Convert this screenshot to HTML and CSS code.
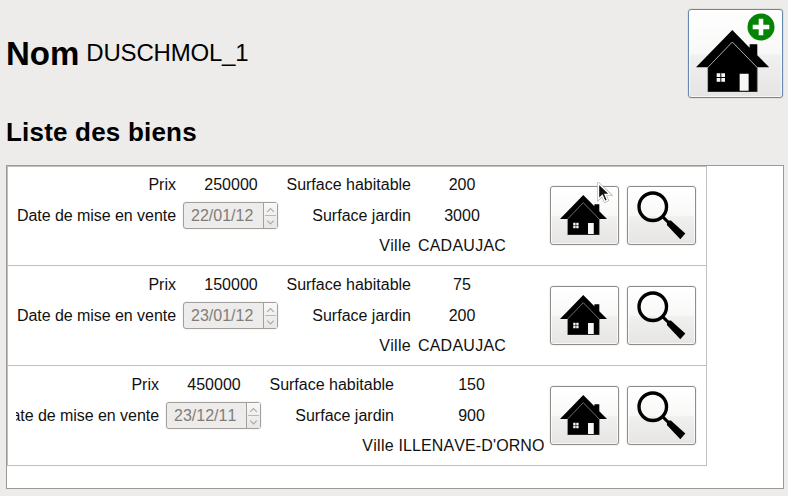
FILE: index.html
```html
<!DOCTYPE html>
<html lang="fr">
<head>
<meta charset="utf-8">
<title>Liste des biens</title>
<link rel="stylesheet" href="styles.css">
</head>
<body>
<svg class="defs" width="0" height="0">
  <symbol id="house" viewBox="48 90 220 187">
    <path d="M157 90 209 143V133H232V166L268 202H232V277H84V202H48Z"/>
    <path d="M82 204 157 126 233 204" fill="none" stroke="#aaa" stroke-width="3"/>
    <path d="M83 204V276H232V204" fill="none" stroke="#777" stroke-width="2"/>
    <path fill="#f7f7f5" d="M110 220h11v11h-11zM124 220h11v11h-11zM110 234h11v11h-11zM124 234h11v11h-11zM179 221h27v51h-27z"/>
  </symbol>
  <symbol id="lens" viewBox="290 92 146 146">
    <circle cx="337" cy="139" r="41" fill="none" stroke="#000" stroke-width="10"/>
    <path d="M367 169 386 188" stroke="#000" stroke-width="9"/>
    <path d="M380 181 391 180 434 219 419 236 379 193Z"/>
  </symbol>
  <symbol id="arrows" viewBox="0 0 14 25">
    <path d="M3.5 8.5 7 5 10.5 8.5M3.5 18 7 21.5 10.5 18" fill="none" stroke="#aaa7a4" stroke-width="1.2"/>
    <path d="M1 12.5H13" stroke="#b5b2af"/>
  </symbol>
</svg>
<header class="header">
  <div class="owner"><h1>Nom</h1><span class="name">DUSCHMOL_1</span></div>
  <button class="btn add">
    <svg class="add-house"><use href="#house"/></svg>
    <svg class="plus" viewBox="0 0 28 28"><circle cx="14" cy="14" r="13.5" fill="#058305"/><path d="M14 5.7V22.3M5.7 14H22.3" stroke="#fff" stroke-width="4.6"/></svg>
  </button>
</header>
<h2>Liste des biens</h2>
<main class="list">
  <section class="row">
    <div class="clip"><div class="form">
      <span class="label">Prix</span><span class="value price">250000</span><span class="label">Surface habitable</span><span class="value">200</span>
      <span class="label date-label">Date de mise en vente</span><span class="spin"><span class="date">22/01/12</span><svg class="arrows"><use href="#arrows"/></svg></span><span class="label">Surface jardin</span><span class="value">3000</span>
      <span class="label city">Ville</span><span class="value town">CADAUJAC</span>
    </div></div>
    <button class="btn"><svg class="house"><use href="#house"/></svg></button>
    <button class="btn"><svg class="lens"><use href="#lens"/></svg></button>
  </section>
  <section class="row">
    <div class="clip"><div class="form">
      <span class="label">Prix</span><span class="value price">150000</span><span class="label">Surface habitable</span><span class="value">75</span>
      <span class="label date-label">Date de mise en vente</span><span class="spin"><span class="date">23/01/12</span><svg class="arrows"><use href="#arrows"/></svg></span><span class="label">Surface jardin</span><span class="value">200</span>
      <span class="label city">Ville</span><span class="value town">CADAUJAC</span>
    </div></div>
    <button class="btn"><svg class="house"><use href="#house"/></svg></button>
    <button class="btn"><svg class="lens"><use href="#lens"/></svg></button>
  </section>
  <section class="row">
    <div class="clip"><div class="form wide">
      <span class="label">Prix</span><span class="value price">450000</span><span class="label">Surface habitable</span><span class="value">150</span>
      <span class="label date-label">Date de mise en vente</span><span class="spin"><span class="date">23/12/11</span><svg class="arrows"><use href="#arrows"/></svg></span><span class="label">Surface jardin</span><span class="value">900</span>
      <span class="label city">Ville</span><span class="value town">ILLENAVE-D'ORNO</span>
    </div></div>
    <button class="btn"><svg class="house"><use href="#house"/></svg></button>
    <button class="btn"><svg class="lens"><use href="#lens"/></svg></button>
  </section>
</main>
<svg class="cursor" viewBox="0 0 16 22"><path d="M1.5 1.5V17L5.3 13.5 8 19.5 10.5 18.2 8 12.5H13Z" fill="#111" stroke="#aaa" stroke-width="2.6"/><path d="M1.5 1.5V17L5.3 13.5 8 19.5 10.5 18.2 8 12.5H13Z" fill="#111" stroke="#fff" stroke-width="1.4"/></svg>
</body>
</html>
```
FILE: styles.css
```css
* { box-sizing: border-box; }
body {
  margin: 0;
  width: 788px;
  height: 496px;
  overflow: hidden;
  padding: 9px 4px 7px 6px;
  background: #edecea;
  color: #000;
  font: 16px/20px "Liberation Sans", Arial, sans-serif;
  font-kerning: none;
}
svg { display: block; }
.defs, .cursor { position: absolute; }
.header {
  display: flex;
  justify-content: space-between;
  height: 90px;
  padding-right: 1px;
}
.owner { display: flex; align-items: center; height: 89px; gap: 7px; }
h1 { margin: 0; font-size: 33px; line-height: 40px; }
.name { font-size: 24px; line-height: 30px; padding-bottom: 2px; letter-spacing: -0.2px; }
h2 { margin: 14px 0 0; height: 52px; font-size: 26px; line-height: 38px; letter-spacing: 0.2px; }
.btn {
  display: flex;
  align-items: flex-start;
  flex: none;
  width: 69px;
  height: 59px;
  padding: 0;
  border: 1px solid #8f8c89;
  border-radius: 3px;
  background: linear-gradient(#fff, #f8f8f7 50%, #f0f0ee 52%, #e6e5e3);
  box-shadow: 0 0 0 1px #0000000c, inset 0 0 0 1px #ffffffb0;
}
.add {
  position: relative;
  width: 95px;
  height: 89px;
  border-color: #6586b1;
}
.add-house { width: 73.3px; height: 62.3px; margin: 20px 0 0 6.5px; }
.plus { position: absolute; left: 58px; top: 3px; width: 28px; height: 28px; }
.list {
  height: 324px;
  border: 1px solid #9c9894;
  background: #fff;
}
.row {
  display: flex;
  width: 700px;
  height: 100px;
  border: solid #c0bfbd;
  border-width: 0 1px 1px;
  padding-left: 8px;
  color: #111;
}
.row:first-child { box-shadow: inset 0 1px #c0bfbd; }
.clip { width: 528px; overflow: hidden; margin-right: 6px; padding-top: 3px; }
.form {
  display: grid;
  grid-template-columns: 160px 95px 127px 89px;
  grid-template-rows: 31px 31px 29px;
  column-gap: 6.5px;
  align-items: center;
}
.wide { margin-left: -17px; grid-template-columns: 160px 95px 127px 142px; }
.label { text-align: right; white-space: nowrap; }
.date-label { letter-spacing: -0.05px; }
.value { display: flex; justify-content: center; white-space: nowrap; }
.price { padding-left: 2px; }
.town { letter-spacing: 0.25px; }
.wide .town { letter-spacing: 0.12px; }
.city { grid-column: 3; letter-spacing: 0.3px; }
.spin {
  display: flex;
  height: 27px;
  border: 1px solid #a29f9c;
  border-radius: 3px;
  background: #edecea;
  box-shadow: 0 0 0 1px #00000009;
}
.date { width: 79px; padding-left: 7.5px; line-height: 25px; color: #807d79; }
.arrows {
  width: 14px;
  height: 25px;
  border-left: 1px solid #a29f9c;
  background: linear-gradient(#f8f8f7, #e8e7e5);
}
.row .btn { margin-top: 20px; }
.row .btn + .btn { margin-left: 8px; }
.house { width: 47px; height: 40px; margin: 8px 0 0 9px; }
.lens { width: 49px; height: 49px; margin: 4px 0 0 9px; }
.cursor { left: 597px; top: 182px; width: 16px; height: 22px; }
```
